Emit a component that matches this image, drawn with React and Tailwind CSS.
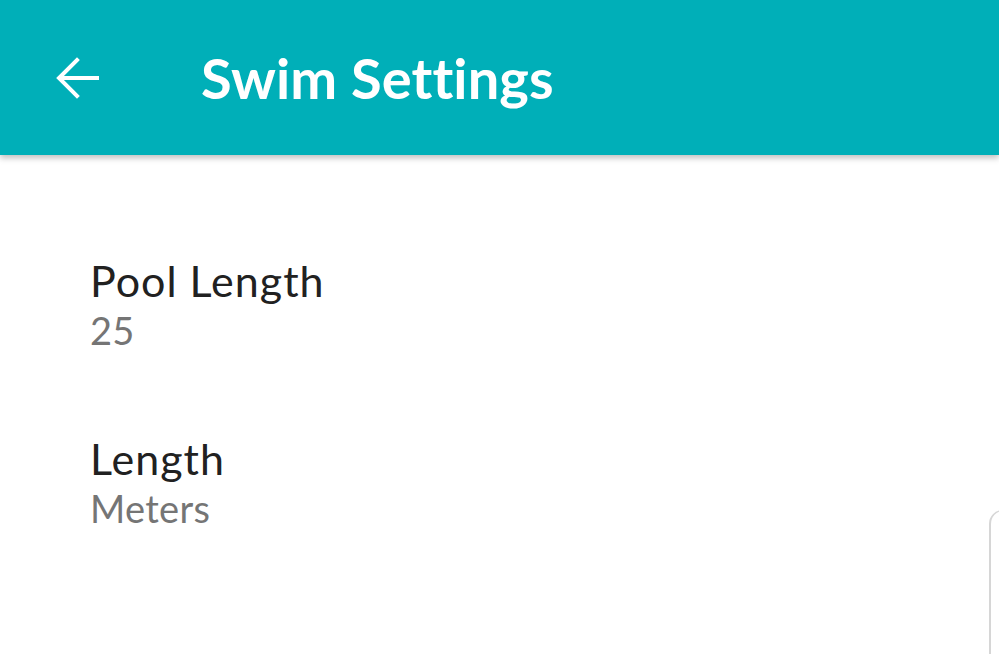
const SettingRow = ({ label, value }) => (
  <div className="flex flex-col">
    <span className="text-[43px] leading-[48px] tracking-[1px] text-[#212121]">{label}</span>
    <span className="text-[38px] leading-[50px] tracking-[0.3px] text-[#757575]">{value}</span>
  </div>
);

const App = () => {
  return (
    <div
      className="relative w-[999px] h-[654px] overflow-hidden bg-white"
      style={{ fontFamily: 'Lato, "Open Sans", sans-serif' }}
    >
      {/* Toolbar */}
      <header className="relative z-10 flex items-center h-[155px] bg-[#00afb8] shadow-[0_3px_6px_rgba(0,0,0,0.25)]">
        <button className="flex items-center justify-center w-[48px] h-[48px] ml-[53px] text-white">
          <svg width="48" height="48" viewBox="0 0 48 48" fill="none" stroke="currentColor" strokeWidth="4" strokeLinecap="square">
            <path d="M8 24h36" />
            <path d="M24 6L6 24l18 18" />
          </svg>
        </button>
        <h1 className="ml-[100px] text-[56px] leading-[64px] font-bold text-white tracking-[0.1px]">Swim Settings</h1>
      </header>

      {/* Settings list */}
      <div className="flex flex-col gap-[80px] pl-[90px] pt-[102px]">
        <SettingRow label="Pool Length" value="25" />
        <SettingRow label="Length" value="Meters" />
      </div>

      {/* peeking card edge */}
      <div className="absolute left-[989px] top-[510px] w-[40px] h-[160px] rounded-tl-[14px] border-l-2 border-t border-[#d6d6d6] bg-white" />
    </div>
  );
};

export default App;
